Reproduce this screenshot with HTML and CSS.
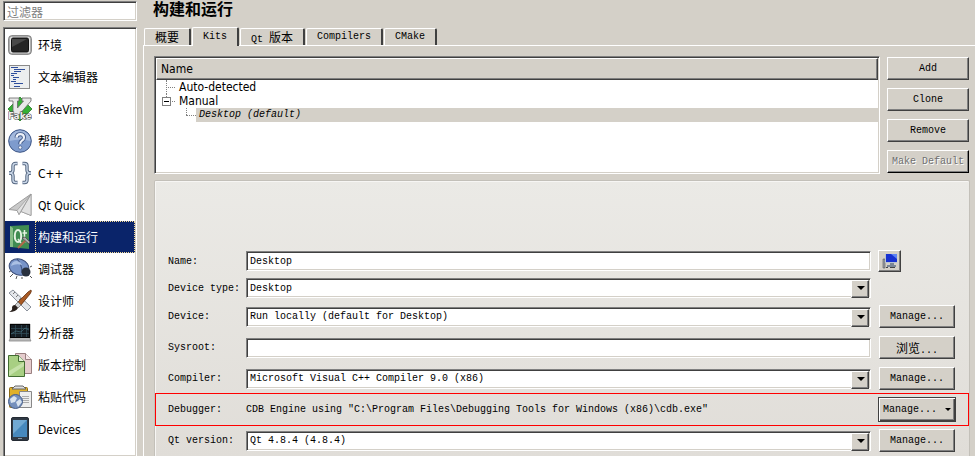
FILE: index.html
```
<!DOCTYPE html>
<html lang="zh-CN">
<head>
    <meta charset="UTF-8">
    <meta name="viewport" content="width=device-width, initial-scale=1.0">
    <title>构建和运行</title>
    <link rel="stylesheet" href="styles.css">
</head>
<body>
    <div class="dialog">
        <aside class="sidebar">
            <input type="text" class="filter" placeholder="过滤器" aria-label="过滤器">
            <ul class="categories">
                <li class="category">
                    <svg class="icon" viewBox="0 0 24 24"><rect x=".7" y="2.7" width="22.6" height="18.6" rx="3" fill="#bbb" stroke="#777"/><rect x="2" y="4" width="20" height="16" rx="2" fill="#e6e6e6"/><rect x="3.5" y="5" width="17" height="14" rx="1.5" fill="#252525" stroke="#111"/><path d="M4 14V6h15z" fill="#484848"/></svg>
                    <span class="category-name">环境</span>
                </li>
                <li class="category">
                    <svg class="icon" viewBox="0 0 24 24"><rect x="1.5" y=".5" width="20" height="23" fill="#eceeef" stroke="#8a8a8a"/><path d="M3 2.500h7M6 4.500h11M6 6.500h7M3 8.500h6M3 10.500h3M5 12.500h6M5 14.500h3M3 16.500h5M6 18.500h9M6 21.500h6" stroke="#2f4f9c" stroke-width="1.100"/></svg>
                    <span class="category-name">文本编辑器</span>
                </li>
                <li class="category">
                    <svg class="icon" viewBox="0 0 24 24"><path d="M12 0l12 12-12 12L0 12z" fill="#35b035" stroke="#176b17" stroke-width=".7"/><path d="M1 1h10v3H9.500v7l6-7H14V1h9v3L10 19H5V4H1z" fill="#e8e8e8" stroke="#666" stroke-width=".8"/><text x="0" y="22" class="fake-text">Fake</text></svg>
                    <span class="category-name">FakeVim</span>
                </li>
                <li class="category">
                    <svg class="icon" viewBox="0 0 24 24"><circle cx="12" cy="12" r="11.3" fill="#7e9bcd" stroke="#3e5685"/><path d="M1.5 12a10.5 10.5 0 0 1 21 0q-10-3-21 0" fill="#a3b8dc"/><path d="M8.5 8.7q.3-3.500 3.800-3.500t3.700 3.200q0 2-2 3.200t-1.700 3.400" fill="none" stroke="#3e5685" stroke-width="4"/><path d="M8.500 8.700q.3-3.500 3.800-3.500t3.700 3.200q0 2-2 3.200t-1.700 3.400" fill="none" stroke="#eef2fa" stroke-width="2.200"/><circle cx="12.200" cy="18.500" r="1.700" fill="#eef2fa" stroke="#3e5685" stroke-width=".7"/></svg>
                    <span class="category-name">帮助</span>
                </li>
                <li class="category">
                    <svg class="icon" viewBox="0 0 24 24"><g fill="none" stroke="#53657f" stroke-width="3.400"><path d="M9.500 2.500H7.500Q5 2.500 5 5v4Q5 12 1 12q4 0 4 3v4q0 2.500 2.500 2.500h2"/><path d="M14.500 2.500h2Q19 2.500 19 5v4q0 3 4 3-4 0-4 3v4q0 2.500-2.500 2.500h-2"/></g><g fill="none" stroke="#cbd8e9" stroke-width="1.400"><path d="M9.500 2.500H7.500Q5 2.500 5 5v4Q5 12 1 12q4 0 4 3v4q0 2.500 2.500 2.500h2"/><path d="M14.500 2.500h2Q19 2.500 19 5v4q0 3 4 3-4 0-4 3v4q0 2.500-2.500 2.500h-2"/></g></svg>
                    <span class="category-name">C++</span>
                </li>
                <li class="category">
                    <svg class="icon" viewBox="0 0 24 24"><path d="M23 1L1 16.500l8 1 2 4 2-3 10 4z" fill="#c9c9c9" stroke="#8b8b8b" stroke-width=".8"/><path d="M23 1L9 17.500l2 4zM23 1L13 18.500l10 4z" fill="#e2e2e2" stroke="#999" stroke-width=".7"/></svg>
                    <span class="category-name">Qt Quick</span>
                </li>
                <li class="category selected">
                    <svg class="icon" viewBox="0 0 24 24"><path d="M2 1l19-1v24L2 22z" fill="#3f8c51"/><path d="M2 1l3 2v19l-3 0z" fill="#86bd87"/><ellipse cx="10" cy="11" rx="3.200" ry="6" fill="none" stroke="#e5f2e2" stroke-width="2"/><path d="M10 14l3 4M16.500 5v10q0 2 2 1.500M14.500 8h4.500" fill="none" stroke="#e5f2e2" stroke-width="1.500"/><path d="M10 23l8-8" stroke="#b0694a" stroke-width="2.200"/><path d="M14 13l3-1 5 5-1 2z" fill="#aaa" stroke="#444" stroke-width=".7"/></svg>
                    <span class="category-name">构建和运行</span>
                </li>
                <li class="category">
                    <svg class="icon" viewBox="0 0 24 24"><path d="M4 13l-3 2M5 17l-3 3M9 19l-1 3M14 20v2M22 19l2 2M22 10l2-1" stroke="#555" fill="none"/><ellipse cx="11" cy="10" rx="10" ry="8" transform="rotate(20 11 10)" fill="#7793c8" stroke="#3b4d78"/><path d="M9 2q5 5 5 14" stroke="#3b4d78" fill="none"/><path d="M3 9q1-5 6-5 4 1 5 4-6-2-11 1" fill="#abc0e4"/><circle cx="18" cy="15" r="4.500" fill="#28303e"/></svg>
                    <span class="category-name">调试器</span>
                </li>
                <li class="category">
                    <svg class="icon" viewBox="0 0 24 24"><path d="M1 4l4-3 18 17-4 4z" fill="#e4e7eb" stroke="#8b929c"/><path d="M5 5l2-2M8 8l2-2M11 11l2-2M14 14l2-2" stroke="#777"/><path d="M23 1q1 1-1 4l-9 11-3-3L20 3z" fill="#a95b25" stroke="#633112" stroke-width=".8"/><path d="M10 13l3 3-3 3-3-3z" fill="#d2d2d2" stroke="#666" stroke-width=".7"/><path d="M7 16l3 3q-2 4-9 4 4-2 3-4 0-3 3-3" fill="#29201c"/></svg>
                    <span class="category-name">设计师</span>
                </li>
                <li class="category">
                    <svg class="icon" viewBox="0 0 24 24"><path d="M2 3h20v15l1 2H1l1-2z" fill="#b9b9b9" stroke="#888" stroke-width=".8"/><rect x="2.500" y="3.500" width="19" height="13" fill="#151d23" stroke="#050505"/><path d="M7.500 4v12M13.500 4v12M18.500 4v12M3 7.500h18M3 12.500h18" stroke="#34505b" stroke-width=".7"/><path d="M3 13l5-3 5 1 4-4 4 2" fill="none" stroke="#45707c" stroke-width=".7"/></svg>
                    <span class="category-name">分析器</span>
                </li>
                <li class="category">
                    <svg class="icon" viewBox="0 0 24 24"><path d="M7.500.5h10l6 6v14h-16z" fill="#e5cccd" stroke="#9a8081"/><path d="M17.500.5v6h6" fill="#f6e9e9" stroke="#9a8081"/><path d="M.5 2.500h10l6 6v15H.5z" fill="#a8cf83" stroke="#426c32"/><path d="M10.500 2.500v6h6" fill="#e2f0d5" stroke="#426c32"/><path d="M1 18L16 9v4L1 23z" fill="#c5e1a9"/></svg>
                    <span class="category-name">版本控制</span>
                </li>
                <li class="category">
                    <svg class="icon" viewBox="0 0 24 24"><rect x="1.500" y="2.500" width="18" height="20" rx="1" fill="#e0b12a" stroke="#8c6b17"/><path d="M4 4l3-3h8l3 3z" fill="#ddd" stroke="#666"/><path d="M11.500 6.500h12v16h-12z" fill="#eee" stroke="#888"/><path d="M14 11.500h7M14 13.500h7M14 15.500h7M14 17.500h7" stroke="#999" stroke-width=".8"/><circle cx="7.500" cy="16.500" r="7" fill="#7590bd" stroke="#485f89"/><path d="M2 14l4-3 3 2-2 4-4 1zM8 17l4-3 2 3-4 5z" fill="#dae4ef"/></svg>
                    <span class="category-name">粘贴代码</span>
                </li>
                <li class="category">
                    <svg class="icon" viewBox="0 0 24 24"><rect x="3.500" y=".5" width="17" height="23" rx="1.500" fill="#303a45" stroke="#242b33"/><rect x="5" y="3" width="14" height="17" fill="#4789bd"/><path d="M5 3h14L5 17z" fill="#71a9d2"/><path d="M10 21.500h4" stroke="#8897a5"/></svg>
                    <span class="category-name">Devices</span>
                </li>
            </ul>
        </aside>

        <main class="page">
            <h1 class="title">构建和运行</h1>
            <div class="tabs" role="tablist">
                <button class="tab" role="tab"><span class="cjk">概要</span></button>
                <button class="tab active" role="tab" aria-selected="true">Kits</button>
                <button class="tab" role="tab">Qt <span class="cjk">版本</span></button>
                <button class="tab" role="tab">Compilers</button>
                <button class="tab" role="tab">CMake</button>
            </div>

            <div class="tab-page">
                <div class="kits">
                    <div class="tree">
                        <div class="tree-header">Name</div>
                        <ul class="tree-rows">
                            <li class="tree-row"><span class="branch"></span>Auto-detected</li>
                            <li class="tree-row"><span class="branch branch-last"><span class="expander"></span></span>Manual</li>
                            <li class="tree-row child"><span class="branch branch-last"></span><span class="current">Desktop (default)</span></li>
                        </ul>
                    </div>
                    <div class="kit-actions">
                        <button class="button">Add</button>
                        <button class="button">Clone</button>
                        <button class="button">Remove</button>
                        <button class="button" disabled>Make Default</button>
                    </div>
                </div>

                <form class="kit-form">
                    <div class="row row-name">
                        <label for="name">Name:</label>
                        <input type="text" class="field" id="name" value="Desktop">
                        <button type="button" class="button icon-button" aria-label="Icon">
                            <svg class="monitor" viewBox="0 0 16 16"><path d="M1 6h2v9H1z" fill="#9aa0a8" stroke="#555" stroke-width=".6"/><path d="M3 1h12v9H3z" fill="#b9c2d0"/><path d="M4 1h11v8H4z" fill="#1731d1"/><path d="M9 1h6v5z" fill="#5d83f4"/><path d="M8 10h4v2H8zM5 12h9v2H5z" fill="#7b8797"/><path d="M4 14h2v1H4zM8 14h5v1H8z" fill="#444"/></svg>
                        </button>
                    </div>
                    <div class="row row-type">
                        <label for="type">Device type:</label>
                        <span class="combo"><select class="field" id="type"><option>Desktop</option></select></span>
                    </div>
                    <div class="row">
                        <label for="device">Device:</label>
                        <span class="combo"><select class="field" id="device"><option>Run locally (default for Desktop)</option></select></span>
                        <button type="button" class="button">Manage...</button>
                    </div>
                    <div class="row">
                        <label for="sysroot">Sysroot:</label>
                        <input type="text" class="field" id="sysroot">
                        <button type="button" class="button"><span class="cjk">浏览</span>...</button>
                    </div>
                    <div class="row">
                        <label for="compiler">Compiler:</label>
                        <span class="combo"><select class="field" id="compiler"><option>Microsoft Visual C++ Compiler 9.0 (x86)</option></select></span>
                        <button type="button" class="button">Manage...</button>
                    </div>
                    <div class="row highlighted">
                        <span>Debugger:</span>
                        <span class="value">CDB Engine using "C:\Program Files\Debugging Tools for Windows (x86)\cdb.exe"</span>
                        <button type="button" class="button menu-button">Manage...</button>
                    </div>
                    <div class="row">
                        <label for="qt">Qt version:</label>
                        <span class="combo"><select class="field" id="qt"><option>Qt 4.8.4 (4.8.4)</option></select></span>
                        <button type="button" class="button">Manage...</button>
                    </div>
                </form>
            </div>
        </main>
    </div>
</body>
</html>
```
FILE: styles.css
```
* {
    box-sizing: border-box;
}

body {
    margin: 0;
    background-color: #d4d0c8;
    color: #000000;
    font-family: "Liberation Mono", "Noto Sans CJK SC", monospace;
    font-size: 10px;
    overflow: hidden;
}

button, input, select {
    font: inherit;
    color: inherit;
    margin: 0;
}

ul {
    list-style: none;
    margin: 0;
    padding: 0;
}

.cjk {
    font-family: "Noto Sans CJK SC", sans-serif;
    font-size: 12px;
}

.dialog {
    display: flex;
    height: 100vh;
    gap: 6px;
    padding-left: 3px;
}

/* Category list */
.sidebar {
    display: flex;
    flex-direction: column;
    flex: none;
    width: 134px;
    padding-top: 1px;
    gap: 6px;
    font-family: "DejaVu Sans Condensed", "Noto Sans CJK SC", sans-serif;
    font-size: 12px;
}

.filter, .categories, .tree, .field {
    border: 1px solid;
    border-color: #808080 #ffffff #ffffff #808080;
    box-shadow: inset 1px 1px #404040, inset -1px -1px #d4d0c8;
    background-color: #ffffff;
}

.filter {
    height: 20px;
    padding: 0 3px;
    font-family: "Noto Sans CJK SC", sans-serif;
}

.filter::placeholder {
    color: #808080;
}

.categories {
    flex: 1;
    padding: 1px;
    border-bottom: 0;
    overflow: hidden;
}

.category {
    display: flex;
    align-items: center;
    height: 32px;
    padding-left: 3px;
    gap: 3px;
}

.icon {
    flex: none;
    width: 24px;
    height: 24px;
}

.fake-text {
    font-family: "DejaVu Sans", sans-serif;
    font-size: 9px;
    font-weight: bold;
    fill: #eeeeee;
    stroke: #444444;
    stroke-width: 1px;
    paint-order: stroke;
}

.category-name {
    flex: 1;
    padding: 2px 0 0 3px;
    line-height: 30px;
}

.selected {
    background-color: #0a246a;
    color: #ffffff;
}

.selected .category-name {
    outline: 1px dotted #f5db95;
    outline-offset: -1px;
}

/* Page */
.page {
    display: flex;
    flex-direction: column;
    flex: 1;
    min-width: 0;
}

.title {
    margin: 0;
    padding-left: 10px;
    font-family: "Liberation Sans", "Noto Sans CJK SC", sans-serif;
    font-size: 16px;
    line-height: 20px;
}

.tabs {
    display: flex;
    align-items: flex-end;
    height: 25px;
    padding-left: 1px;
    gap: 1px;
}

.tab {
    height: 17px;
    padding: 0 10px;
    border: 1px solid #ffffff;
    border-right: 2px solid #404040;
    border-bottom: 0;
    border-radius: 2px 2px 0 0;
    background-color: #d4d0c8;
    line-height: 16px;
}

.tab.active {
    position: relative;
    height: 19px;
    margin-bottom: -1px;
}

.tab-page {
    display: flex;
    flex-direction: column;
    flex: 1;
    padding: 10px 5px 0 10px;
    border: 1px solid #ffffff;
    border-width: 1px 0 0 1px;
    gap: 6px;
}

.kits {
    display: flex;
    gap: 7px;
}

.tree {
    flex: 1;
    height: 118px;
    padding: 1px;
    font-family: "DejaVu Sans Condensed", sans-serif;
    font-size: 12px;
}

.tree-header {
    height: 22px;
    padding-left: 4px;
    border: 1px solid;
    border-color: #ffffff #404040 #404040 #ffffff;
    box-shadow: inset -1px -1px #808080;
    background-color: #d4d0c8;
    line-height: 21px;
}

.tree-row {
    display: flex;
    height: 14px;
    padding-left: 10px;
    line-height: 14px;
}

.tree-row.child {
    padding-left: 30px;
}

.branch {
    position: relative;
    flex: none;
    width: 13px;
}

.branch::before {
    content: "";
    position: absolute;
    inset: 0 4px 0 0;
    border-left: 1px dotted #808080;
}

.branch::after {
    content: "";
    position: absolute;
    inset: 7px 4px 6px 0;
    border-top: 1px dotted #808080;
}

.branch-last::before {
    bottom: 7px;
}

.expander {
    position: absolute;
    z-index: 1;
    top: 3px;
    left: -4px;
    width: 9px;
    height: 9px;
    border: 1px solid #808080;
    background: linear-gradient(#000000, #000000) center / 5px 1px no-repeat #ffffff;
}

.child .branch {
    width: 10px;
}

.child .branch::before, .child .branch::after {
    right: 0;
}

.current {
    flex: 1;
    padding-left: 3px;
    background-color: #d4d0c8;
    font-family: "Liberation Mono", monospace;
    font-size: 10px;
    font-style: italic;
}

.kit-actions {
    display: flex;
    flex-direction: column;
    width: 83px;
    padding: 1px 1px 0 0;
    gap: 8px;
}

.button {
    height: 23px;
    padding: 0;
    border: 1px solid;
    border-color: #ffffff #404040 #404040 #ffffff;
    box-shadow: inset -1px -1px #808080;
    background-color: #d4d0c8;
    white-space: nowrap;
}

.button:disabled {
    border-color: #ffffff #000000 #000000 #ffffff;
    color: #707070;
    text-shadow: 1px 1px #ffffff;
}

/* Kit settings */
.kit-form {
    display: flex;
    flex-direction: column;
    flex: 1;
    padding: 69px 13px 0 13px;
    border: 1px solid #c3c0b9;
    border-bottom: 0;
    border-radius: 2px 2px 0 0;
    box-shadow: inset 0 1px #f7f6f4, inset 1px 0 #f7f6f4;
    background-image: linear-gradient(#ebeae6, #e0ddd8);
    gap: 8px;
}

.row {
    display: grid;
    grid-template-columns: 78px 1fr 85px;
    align-items: center;
    height: 23px;
    flex: none;
}

.row .button {
    margin-left: 8px;
    width: 76px;
}

.row-name {
    height: 22px;
}

.row-type {
    height: 20px;
    margin: -2px 0 -1px;
}

.field {
    width: 100%;
    height: 20px;
    padding: 0 3px;
    border-radius: 0;
    appearance: none;
}

.combo {
    position: relative;
    display: block;
    height: 20px;
}

.combo::before {
    content: "";
    position: absolute;
    top: 2px;
    right: 2px;
    width: 16px;
    height: 16px;
    border: 1px solid;
    border-color: #ffffff #404040 #404040 #ffffff;
    box-shadow: inset -1px -1px #808080;
    background-color: #d4d0c8;
    pointer-events: none;
}

.combo::after {
    content: "";
    position: absolute;
    top: 8px;
    right: 6px;
    border: 4px solid transparent;
    border-top-color: #000000;
    border-bottom: 0;
    pointer-events: none;
}

.row .icon-button {
    display: flex;
    align-items: center;
    justify-content: center;
    width: 23px;
    height: 22px;
    margin-left: 7px;
}

.monitor {
    width: 16px;
    height: 16px;
}

.row.highlighted {
    height: 33px;
    margin: -5px -13px;
    padding: 0 12px;
    border: 1px solid #ff0000;
}

.row .menu-button {
    display: flex;
    align-items: center;
    justify-content: space-between;
    width: 78px;
    height: 25px;
    margin-left: 7px;
    padding: 0 4px;
    border-color: #404040;
    box-shadow: inset 1px 1px #ffffff, inset -1px -1px #404040, inset -2px -2px #808080;
}

.menu-button::after {
    content: "";
    border: 3px solid transparent;
    border-top-color: #000000;
    border-bottom: 0;
}
```
